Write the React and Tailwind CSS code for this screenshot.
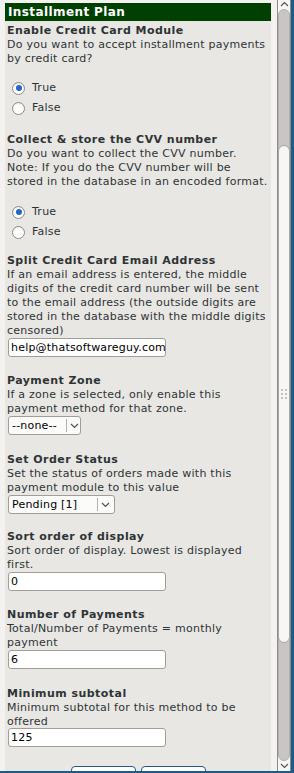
import React from 'react';

function Radio({ checked, label }) {
  return (
    <div className="flex items-center h-[20px] pl-[5px]">
      <span className="w-[13px] h-[13px] rounded-full border border-[#8d8a86] bg-white flex items-center justify-center shadow-[inset_0_1px_1px_rgba(0,0,0,0.08)]">
        {checked && <span className="w-[6px] h-[6px] rounded-full bg-[#1f67c9]"></span>}
      </span>
      <span className="ml-[7px] tracking-[0.25px]">{label}</span>
    </div>
  );
}

function TextBox({ value }) {
  return (
    <div className="ml-[1px] w-[158px] h-[19px] bg-white border border-[#a19d99] rounded-[3px] flex items-center pl-[2px] text-black tracking-[0.2px]">
      {value}
    </div>
  );
}

function Select({ value, width, sep }) {
  return (
    <div className={`ml-[1px] h-[19px] bg-[#fbfbfa] border border-[#a19d99] rounded-[3px] flex items-center text-black ${width}`}>
      <span className={`pl-[3px] tracking-[0.2px] ${sep}`}>{value}</span>
      <span className="h-[13px] border-l border-[#b5b1ad]"></span>
      <svg className="ml-[3px]" width="9" height="6" viewBox="0 0 9 6" fill="none" stroke="#55514d" strokeWidth="1.2">
        <path d="M1 1l3.5 3.5L8 1" />
      </svg>
    </div>
  );
}

function Section({ mt, title, lines, children }) {
  return (
    <div className={mt}>
      <div className="font-bold tracking-[0.45px] whitespace-nowrap">{title}</div>
      {lines.map((l, i) => (
        <div key={i} className="whitespace-nowrap tracking-[0.25px]">{l}</div>
      ))}
      {children}
    </div>
  );
}

export default function App() {
  return (
    <div className="w-[294px] h-[773px] flex flex-col bg-[#1c5c8a] overflow-hidden font-['DejaVu_Sans',sans-serif] text-[11px] leading-[14px] text-[#2e3436]">
      <div className="flex h-[771px] pr-[3px]">
        {/* page area */}
        <div className="w-[277px] bg-[#f3f2f0] overflow-hidden pt-[3px] pr-[6px]">
          {/* top part with light strip */}
          <div className="ml-[5px] bg-[#e8e7e3] pl-[2px] pb-[11px]">
            <div className="-ml-[2px] h-[18px] bg-[#004000] text-white text-[12px] font-bold tracking-[0.4px] pl-[3px] flex items-center">
              Installment Plan
            </div>
            <Section
              mt="mt-[3px]"
              title="Enable Credit Card Module"
              lines={['Do you want to accept installment payments', 'by credit card?']}
            >
              <div className="mt-[12px]">
                <Radio checked label="True" />
                <Radio label="False" />
              </div>
            </Section>
            <Section
              mt="mt-[15px]"
              title="Collect & store the CVV number"
              lines={[
                'Do you want to collect the CVV number.',
                'Note: If you do the CVV number will be',
                'stored in the database in an encoded format.',
              ]}
            >
              <div className="mt-[13px]">
                <Radio checked label="True" />
                <Radio label="False" />
              </div>
            </Section>
          </div>

          {/* lower part */}
          <div className="ml-[5px] bg-[#e8e7e3] pl-[2px] pt-[1px] h-[529px]">
            <Section
              mt="mt-0"
              title="Split Credit Card Email Address"
              lines={[
                'If an email address is entered, the middle',
                'digits of the credit card number will be sent',
                'to the email address (the outside digits are',
                'stored in the database with the middle digits',
                'censored)',
              ]}
            >
              <div className="mt-0">
                <TextBox value="help@thatsoftwareguy.com" />
              </div>
            </Section>
            <Section
              mt="mt-[17px]"
              title="Payment Zone"
              lines={['If a zone is selected, only enable this', 'payment method for that zone.']}
            >
              <Select value="--none--" width="w-[73px]" sep="w-[57px]" />
            </Section>
            <Section
              mt="mt-[18px]"
              title="Set Order Status"
              lines={['Set the status of orders made with this', 'payment module to this value']}
            >
              <div className="mt-0">
                <Select value="Pending [1]" width="w-[107px]" sep="w-[88px]" />
              </div>
            </Section>
            <Section
              mt="mt-[16px]"
              title="Sort order of display"
              lines={['Sort order of display. Lowest is displayed', 'first.']}
            >
              <div className="mt-0">
                <TextBox value="0" />
              </div>
            </Section>
            <Section
              mt="mt-[17px]"
              title="Number of Payments"
              lines={['Total/Number of Payments = monthly', 'payment']}
            >
              <div className="mt-0">
                <TextBox value="6" />
              </div>
            </Section>
            <Section
              mt="mt-[18px]"
              title="Minimum subtotal"
              lines={['Minimum subtotal for this method to be', 'offered']}
            >
              <div className="mt-[-1px]">
                <TextBox value="125" />
              </div>
            </Section>
            <div className="flex gap-[5px] mt-[19px] ml-[64px]">
              <div className="w-[65px] h-[22px] bg-white border border-[#24588a] rounded-[4px]"></div>
              <div className="w-[65px] h-[22px] bg-white border border-[#24588a] rounded-[4px]"></div>
            </div>
          </div>
        </div>

        {/* scrollbar */}
        <div className="w-[14px] bg-[#f6f6f5] border-l border-r border-[#8e8b88] flex flex-col items-center">
          <svg className="mt-[1px]" width="9" height="6" viewBox="0 0 9 6" fill="none" stroke="#55514d" strokeWidth="1.1">
            <path d="M1 5l3.5-3.5L8 5" />
          </svg>
          <div className="mt-[2px] w-[12px] flex-1 rounded-[6px] bg-[#c9c5c4] border border-[#b3afad] flex flex-col">
            <div className="mt-[135px] h-[498px] -mx-[1px] rounded-[6px] bg-[#f6f6f5] border border-[#a9a5a3] flex items-center justify-center">
              <div className="grid grid-cols-2 gap-[2px]">
                <span className="w-[2px] h-[2px] bg-[#c4c1bf]"></span>
                <span className="w-[2px] h-[2px] bg-[#c4c1bf]"></span>
                <span className="w-[2px] h-[2px] bg-[#c4c1bf]"></span>
                <span className="w-[2px] h-[2px] bg-[#c4c1bf]"></span>
                <span className="w-[2px] h-[2px] bg-[#c4c1bf]"></span>
                <span className="w-[2px] h-[2px] bg-[#c4c1bf]"></span>
              </div>
            </div>
          </div>
          <svg className="my-[2px]" width="9" height="6" viewBox="0 0 9 6" fill="none" stroke="#55514d" strokeWidth="1.1">
            <path d="M1 1l3.5 3.5L8 1" />
          </svg>
        </div>
      </div>
    </div>
  );
}
